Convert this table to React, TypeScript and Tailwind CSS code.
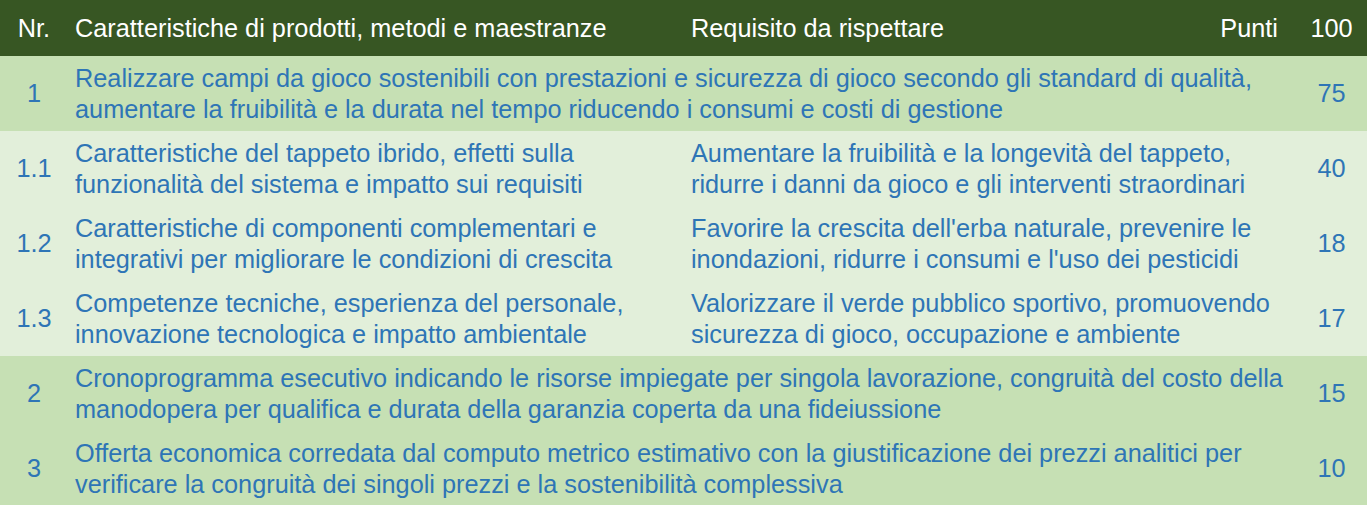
import * as React from "react";

type Row = {
    nr: string;
    main: string;
    req?: string;
    pts: string;
    light?: boolean;
};

const rows: Row[] = [
    {
        nr: "1",
        main: "Realizzare campi da gioco sostenibili con prestazioni e sicurezza di gioco secondo gli standard di qualità, aumentare la fruibilità e la durata nel tempo riducendo i consumi e costi di gestione",
        pts: "75",
    },
    {
        nr: "1.1",
        main: "Caratteristiche del tappeto ibrido, effetti sulla funzionalità del sistema e impatto sui requisiti",
        req: "Aumentare la fruibilità e la longevità del tappeto, ridurre i danni da gioco e gli interventi straordinari",
        pts: "40",
        light: true,
    },
    {
        nr: "1.2",
        main: "Caratteristiche di componenti complementari e integrativi per migliorare le condizioni di crescita",
        req: "Favorire la crescita dell'erba naturale, prevenire le inondazioni, ridurre i consumi e l'uso dei pesticidi",
        pts: "18",
        light: true,
    },
    {
        nr: "1.3",
        main: "Competenze tecniche, esperienza del personale, innovazione tecnologica e impatto ambientale",
        req: "Valorizzare il verde pubblico sportivo, promuovendo sicurezza di gioco, occupazione e ambiente",
        pts: "17",
        light: true,
    },
    {
        nr: "2",
        main: "Cronoprogramma esecutivo indicando le risorse impiegate per singola lavorazione, congruità del costo della manodopera per qualifica e durata della garanzia coperta da una fideiussione",
        pts: "15",
    },
    {
        nr: "3",
        main: "Offerta economica corredata dal computo metrico estimativo con la giustificazione dei prezzi analitici per verificare la congruità dei singoli prezzi e la sostenibilità complessiva",
        pts: "10",
    },
];

const App = () => {
    return (
        <div className="w-[1367px] h-[505px] overflow-hidden bg-[#c6e0b4] font-['Liberation_Sans',Arial,sans-serif] text-[25.3px] leading-[31px]">
            {/* header */}
            <div className="grid grid-cols-[68px_616px_1fr_77px] h-[56px] items-center bg-[#375623] text-white">
                <div className="text-center">Nr.</div>
                <div className="pl-[7px]">Caratteristiche di prodotti, metodi e maestranze</div>
                <div className="flex justify-between pl-[7px] pr-[12px]">
                    <span>Requisito da rispettare</span>
                    <span>Punti</span>
                </div>
                <div className="text-center pl-[6px]">100</div>
            </div>

            {rows.map((r) => (
                <div
                    key={r.nr}
                    className={
                        "grid grid-cols-[68px_616px_1fr_77px] h-[75px] items-center text-[#2e75b6] " +
                        (r.light ? "bg-[#e2efda]" : "bg-[#c6e0b4]")
                    }
                >
                    <div className="text-center">{r.nr}</div>
                    {r.req ? (
                        <>
                            <div className="pl-[7px]">{r.main}</div>
                            <div className="pl-[7px]">{r.req}</div>
                        </>
                    ) : (
                        <div className="col-span-2 pl-[7px]">{r.main}</div>
                    )}
                    <div className="text-center pl-[6px]">{r.pts}</div>
                </div>
            ))}
        </div>
    );
};

export default App;
